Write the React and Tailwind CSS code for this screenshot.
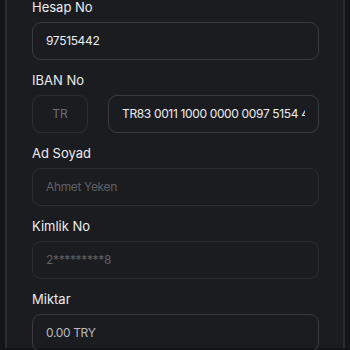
export default function App() {
  return (
    <div
      className="w-[350px] h-[350px] overflow-hidden bg-[#141519] px-[5px]"
      style={{ fontFamily: "Inter, 'Noto Sans', sans-serif" }}
    >
      <div className="h-full border-x-2 border-[#2a2b30] bg-[#1b1c20] pl-[25px] pr-[24px]">
        <div className="-mt-[2px]">
          <Label first>Hesap No</Label>
          <Input value="97515442" />

          <Label>IBAN No</Label>
          <div className="flex gap-[20px]">
            <div className="w-[56px] h-[38px] shrink-0 rounded-[9px] border border-[#2c2d32] flex items-center justify-center text-[12px] text-[#6b6c72]">
              TR
            </div>
            <div className="flex-1 min-w-0 h-[38px] rounded-[9px] border border-[#3a3b41] flex items-center px-[13px]">
              <span className="block w-full whitespace-nowrap overflow-hidden text-[12px] tracking-[-0.35px] text-[#ececee]">
                TR83 0011 1000 0000 0097 5154 42
              </span>
            </div>
          </div>

          <Label>Ad Soyad</Label>
          <Input value="Ahmet Yeken" muted />

          <Label>Kimlik No</Label>
          <Input value="2*********8" muted />

          <Label>Miktar</Label>
          <Input value="0.00 TRY" soft />
        </div>
      </div>
    </div>
  );
}

function Label({ children, first }) {
  return (
    <div className={`${first ? "mt-0" : "mt-[11px]"} h-[18px] leading-[18px] mb-[6px] text-[13px] text-[#ececee]`}>
      {children}
    </div>
  );
}

function Input({ value, muted, soft }) {
  const border = muted ? "border-[#2c2d32]" : "border-[#3a3b41]";
  const color = muted ? "text-[#5f6066]" : soft ? "text-[#b9babe]" : "text-[#ececee]";
  return (
    <div className={`h-[38px] rounded-[9px] border ${border} flex items-center px-[13px] overflow-hidden`}>
      <span className={`whitespace-nowrap text-[12px] tracking-[-0.35px] ${color}`}>{value}</span>
    </div>
  );
}
